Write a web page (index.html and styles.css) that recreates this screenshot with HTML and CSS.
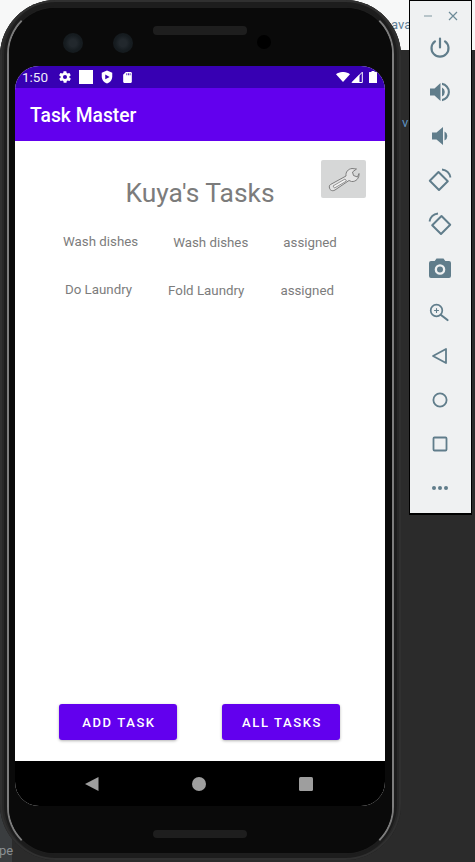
FILE: index.html
```html
<!DOCTYPE html>
<html lang="en">
<head>
<meta charset="utf-8">
<title>Task Master</title>
<link rel="stylesheet" href="styles.css">
</head>
<body>
<div class="desktop">
  <div class="ide-top"></div>
  <div class="ide-left-strip"></div>
  <span class="ide-text ide-ava">ava</span>
  <span class="ide-text ide-v">v</span>
  <span class="ide-text ide-pe">pe</span>

  <div class="phone">
    <div class="ring">
      <div class="bezel">
        <div class="speaker speaker-top"></div>
        <div class="lens lens-a"></div>
        <div class="lens lens-b"></div>
        <div class="front-cam"></div>
        <div class="speaker speaker-bottom"></div>

        <div class="screen">
          <div class="statusbar">
            <span class="clock">1:50</span>
            <svg class="st st-gear" viewBox="0 0 24 24"><path fill="#fff" d="M19.4 13a7.5 7.5 0 0 0 0-2l2.1-1.6a.5.5 0 0 0 .1-.7l-2-3.4a.5.5 0 0 0-.6-.2l-2.5 1a7.3 7.3 0 0 0-1.700-1l-.4-2.600a.5.500 0 0 0-.5-.4h-4a.5.500 0 0 0-.5.400l-.4 2.600a7.300 7.300 0 0 0-1.700 1l-2.500-1a.5.500 0 0 0-.6.200l-2 3.400a.5.500 0 0 0 .1.700L4.600 11a7.500 7.500 0 0 0 0 2l-2.100 1.600a.5.500 0 0 0-.1.700l2 3.400c.1.200.4.300.6.200l2.500-1c.5.400 1.100.700 1.700 1l.4 2.600c0 .2.200.4.500.400h4c.3 0 .5-.2.500-.4l.4-2.600a7.300 7.300 0 0 0 1.700-1l2.500 1c.2.100.5 0 .6-.2l2-3.400a.5.500 0 0 0-.1-.7zM12 15.500a3.500 3.500 0 1 1 0-7 3.500 3.500 0 0 1 0 7z"/></svg>
            <span class="st-square"></span>
            <svg class="st st-shield" viewBox="0 0 24 24"><path fill="#fff" d="M12 1 3 4.500V11c0 5.600 3.800 10.700 9 12 5.200-1.300 9-6.400 9-12V4.500z"/><path fill="#3700b3" d="M9 7.500v8.500l7.500-4.200z"/></svg>
            <svg class="st st-sd" viewBox="0 0 24 24"><path fill="#fff" d="M9 2h9a2 2 0 0 1 2 2v16a2 2 0 0 1-2 2H6a2 2 0 0 1-2-2V7z"/><path fill="#3700b3" d="M10 4h1.500v4H10zM13 4h1.500v4H13zM16 4h1.500v4H16z"/></svg>
            <span class="st-spacer"></span>
            <svg class="st-wifi" viewBox="0 0 14 10"><path fill="#fff" d="M0 2.300C3.800-.8 10.200-.8 14 2.300L7 10z"/></svg>
            <svg class="st-signal" viewBox="0 0 12 12"><path fill="none" stroke="#fff" d="M11.300 1.200V11.500H1.200z"/><path fill="#fff" d="M8.500 4v7.500H0.500L8.500 3.500z"/></svg>
            <svg class="st-batt" viewBox="0 0 8 12"><path fill="#fff" d="M2.500 0h3v1H7.500a.5.500 0 0 1 .5.500V12H0V1.500A.5.500 0 0 1 .5 1h2z"/></svg>
          </div>
          <div class="appbar">Task Master</div>
          <main class="content">
            <div class="wrench-btn">
              <svg viewBox="0 0 34 26" class="wrench">
                <path fill="#e4e4e4" stroke="#7d7d7d" stroke-width="1" stroke-linejoin="round" d="M3.500 18.500 19 10C18.500 6 21 3 25 2.500L29.500 3 25.500 6 26.500 9.500 30.500 11 32 7.500C32.500 12 29 16 24.500 15.500L22 14.500 8 24C5.500 25.500 3 24.500 2.500 22 2 20.500 2.500 19 3.500 18.500z"/>
                <path fill="#f4f4f4" stroke="#7d7d7d" stroke-width=".8" stroke-linejoin="round" d="M6 20 18 13 19.500 15 7.500 22z"/>
              </svg>
            </div>
            <h1 class="title">Kuya's Tasks</h1>
            <div class="task-row row-one">
              <span class="cell">Wash dishes</span>
              <span class="cell low">Wash dishes</span>
              <span class="cell low">assigned</span>
            </div>
            <div class="task-row row-two">
              <span class="cell">Do Laundry</span>
              <span class="cell low">Fold Laundry</span>
              <span class="cell low">assigned</span>
            </div>
            <div class="actions">
              <button class="btn">ADD TASK</button>
              <button class="btn">ALL TASKS</button>
            </div>
          </main>
          <div class="navbar">
            <svg class="nav-ico" viewBox="0 0 14 14"><path fill="#9e9e9e" d="M0 7 13.500 0v14z"/></svg>
            <svg class="nav-ico" viewBox="0 0 14 14"><circle fill="#9e9e9e" cx="7" cy="7" r="7"/></svg>
            <svg class="nav-ico" viewBox="0 0 14 14"><rect fill="#9e9e9e" width="14" height="14" rx="1.500"/></svg>
          </div>
        </div>
      </div>
    </div>
  </div>

  <aside class="toolbar">
    <div class="win-controls">
      <svg viewBox="0 0 12 12"><path d="M2 6h8" stroke="#9fb0b8" stroke-width="1.400"/></svg>
      <svg viewBox="0 0 12 12"><path d="M2 2l8 8M10 2l-8 8" stroke="#6d8a98" stroke-width="1.200"/></svg>
    </div>
    <svg class="tool" viewBox="0 0 24 24"><path fill="none" stroke="#607d8b" stroke-width="2.200" stroke-linecap="round" d="M12 2.500v9M7 5.300a8.500 8.500 0 1 0 10 0"/></svg>
    <svg class="tool" viewBox="0 0 24 24"><path fill="#607d8b" d="M2 8.500v7h4.500L12.500 21V3L6.500 8.500z"/><path fill="#607d8b" d="M14 7.500a5 5 0 0 1 0 9zM14 2.800v2.300a7 7 0 0 1 0 13.800v2.300a9.300 9.300 0 0 0 0-18.400z"/></svg>
    <svg class="tool" viewBox="0 0 24 24"><path fill="#607d8b" d="M4 8.500v7h4.500L15 21V3L8.500 8.500z"/><path fill="#607d8b" d="M16.500 7.500a5 5 0 0 1 0 9z"/></svg>
    <svg class="tool" viewBox="0 0 24 24"><path fill="none" stroke="#607d8b" stroke-width="2" stroke-linejoin="round" d="M10.500 4 1.800 12.800 11 22l8.800-8.800z"/><path fill="none" stroke="#607d8b" stroke-width="1.800" d="M14 1.500c4.300.6 7.700 3.800 8.500 8"/></svg>
    <svg class="tool" viewBox="0 0 24 24"><path fill="none" stroke="#607d8b" stroke-width="2" stroke-linejoin="round" d="M13.500 4 22.200 12.800 13 22l-8.800-8.800z"/><path fill="none" stroke="#607d8b" stroke-width="1.800" d="M10 1.500C5.700 2.100 2.300 5.300 1.500 9.500"/></svg>
    <svg class="tool" viewBox="0 0 24 24"><path fill="#607d8b" fill-rule="evenodd" d="M8.500 2.500h7L17.300 5H21a2 2 0 0 1 2 2v13a2 2 0 0 1-2 2H3a2 2 0 0 1-2-2V7a2 2 0 0 1 2-2h3.700zM12 8.200a5.300 5.300 0 1 0 0 10.600 5.300 5.300 0 0 0 0-10.600zm0 2.300a3 3 0 1 1 0 6 3 3 0 0 1 0-6z"/></svg>
    <svg class="tool" viewBox="0 0 24 24"><g fill="none" stroke="#607d8b" stroke-width="1.700" stroke-linecap="round"><circle cx="8.500" cy="10.500" r="5.800"/><path d="M13 15 19.500 20" stroke-width="2.200"/><path d="M8.500 8.500v4M6.500 10.500h4" stroke-width="1.100"/></g></svg>
    <svg class="tool" viewBox="0 0 24 24"><path fill="none" stroke="#607d8b" stroke-width="1.800" stroke-linejoin="round" d="M5 12 18 5v14z"/></svg>
    <svg class="tool" viewBox="0 0 24 24"><circle fill="none" stroke="#607d8b" stroke-width="1.800" cx="12" cy="12" r="6.600"/></svg>
    <svg class="tool" viewBox="0 0 24 24"><rect fill="none" stroke="#607d8b" stroke-width="1.800" x="5.500" y="5.500" width="13" height="13" rx="1"/></svg>
    <svg class="tool" viewBox="0 0 24 24"><g fill="#607d8b"><circle cx="6" cy="12" r="2"/><circle cx="12" cy="12" r="2"/><circle cx="18" cy="12" r="2"/></g></svg>
  </aside>
</div>
</body>
</html>
```

FILE: styles.css
```css
* { box-sizing: border-box; }
html, body { margin: 0; padding: 0; }
body { width: 475px; height: 862px; overflow: hidden; font-family: Roboto, "Noto Sans", sans-serif; }

.desktop { position: relative; width: 475px; height: 862px; overflow: hidden; background: #2b2b2b; }
.ide-top { position: absolute; left: 0; top: 0; width: 475px; height: 50px; background: #f7f8f8; }
.ide-left-strip { position: absolute; left: 0; top: 50px; width: 12px; height: 812px; background: #3a3d3f; }
.ide-text { position: absolute; font-size: 13px; color: #5f7f96; }
.ide-ava { left: 391px; top: 17px; }
.ide-v { left: 402px; top: 115px; color: #5d92c0; }
.ide-pe { left: -1px; top: 843px; color: #8a8f92; z-index: 0; }

.phone { position: absolute; left: 0; top: 0; width: 401px; height: 860px; padding: 6px 7px 5px; border-radius: 56px; background: #1d1d1d; box-shadow: inset 0 0 0 2px #303030, inset 4px 0 0 #282828, inset -4px 0 0 #282828; }
.ring { width: 100%; height: 100%; border-radius: 48px; border-style: solid; border-width: 2px; border-color: #1d1d1d #7d7d7d #1d1d1d #7d7d7d; background: #0a0a0a; }
.bezel { position: relative; width: 100%; height: 100%; padding: 58px 6px 0; border-radius: 46px; background: #0a0a0a; }

.speaker { position: absolute; left: 144px; width: 94px; height: 9px; border-radius: 4px; background: #1e1e1e; }
.speaker-top { top: 18px; }
.speaker-bottom { bottom: 15px; height: 8px; }
.lens { position: absolute; top: 25px; width: 20px; height: 20px; border-radius: 50%; background: radial-gradient(circle, #22282d 0 25%, #161c20 55%, #12171a 100%); }
.lens-a { left: 54px; }
.lens-b { left: 104px; }
.front-cam { position: absolute; top: 27px; left: 248px; width: 14px; height: 14px; border-radius: 50%; background: #000; }

.screen { display: flex; flex-direction: column; width: 370px; height: 740px; border-radius: 24px; overflow: hidden; background: #fff; }
.statusbar { flex: none; display: flex; align-items: center; height: 22px; padding: 0 8px 0 7px; background: #3700b3; color: #fff; }
.clock { font-size: 13.500px; width: 36px; color: #f1ecfa; }
.st { width: 14px; height: 14px; }
.st-square { width: 14px; height: 14px; margin: 0 7px; background: #fff; }
.st-sd { margin-left: 7px; width: 13px; height: 13px; }
.st-spacer { flex: 1; }
.st-wifi { width: 14px; height: 10px; margin-right: 1px; }
.st-signal { width: 12px; height: 12px; margin-right: 6px; }
.st-batt { width: 8px; height: 12px; }

.appbar { flex: none; display: flex; align-items: center; height: 53px; padding: 2px 0 0 15px; background: #6200ee; color: #fff; font-size: 19.300px; font-weight: 500; }

.content { position: relative; flex: 1; display: flex; flex-direction: column; background: #fff; color: #7c7c7c; }
.wrench-btn { position: absolute; top: 19px; left: 306px; width: 45px; height: 38px; display: flex; align-items: center; justify-content: center; border-radius: 2px; background: #d6d7d7; }
.wrench { width: 34px; height: 26px; }
.title { margin: 37px 0 0; text-align: center; font-size: 26.400px; font-weight: 400; line-height: 30px; }
.task-row { display: flex; font-size: 13.300px; line-height: 16px; }
.row-one { margin-top: 26px; padding-left: 48px; gap: 35px; }
.row-two { margin-top: 32px; padding-left: 50px; gap: 36px; }
.low { position: relative; top: 1px; }

.actions { margin-top: auto; padding: 0 45px 21px 44px; display: flex; justify-content: space-between; }
.btn { width: 118px; height: 36px; padding: 0 0 0 2px; border: 0; border-radius: 3px; background: #6200ee; color: #fff; font-family: inherit; font-size: 13px; font-weight: 500; letter-spacing: 1.600px; box-shadow: 0 1px 3px rgba(0,0,0,.3); }

.navbar { flex: none; display: flex; align-items: center; justify-content: space-between; height: 45px; padding: 0 72px 0 70px; background: #000; }
.nav-ico { width: 14px; height: 14px; }

.toolbar { position: absolute; left: 409px; top: 0; width: 63px; height: 515px; display: flex; flex-direction: column; align-items: center; gap: 20px; padding: 35px 1px 0 0; background: #eff1f2; border: 1px solid #000; border-width: 1px 1px 2px; }
.win-controls { position: absolute; top: 9px; left: 0; width: 100%; display: flex; justify-content: space-between; padding: 0 12px; }
.win-controls svg { width: 12px; height: 12px; }
.tool { flex: none; width: 24px; height: 24px; }
```
